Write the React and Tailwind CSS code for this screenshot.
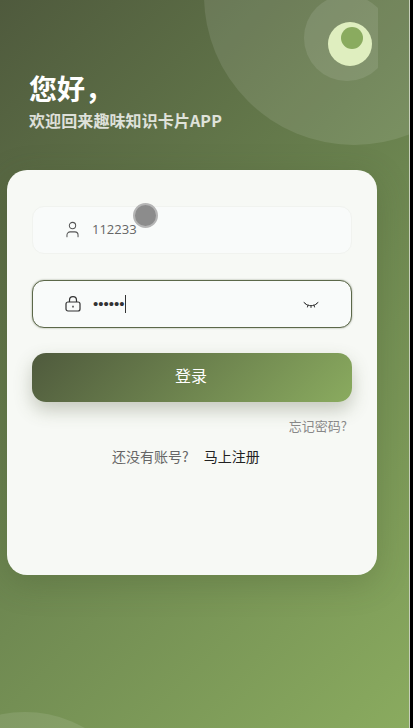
import React from 'react';
import { User } from 'lucide-react';

const font = { fontFamily: '"Noto Sans CJK SC", "Noto Sans", sans-serif' };

const App = () => {
    return (
        <div className="w-[413px] h-[728px] bg-black overflow-hidden" style={font}>
            <div className="relative w-[410px] h-full overflow-hidden border-r border-[#c9d0bd] bg-[linear-gradient(135deg,#4f5a3d_0%,#6c8550_50%,#8aab5f_100%)]">

                {/* Background circles */}
                <div className="absolute left-[204px] top-[-155px] w-[300px] h-[300px] rounded-full bg-white/10"></div>
                <div className="absolute left-0 top-0 w-[378px] h-[100px] overflow-hidden">
                    <div className="absolute left-[304px] top-[-5px] w-[86px] h-[86px] rounded-full bg-white/10"></div>
                    <div className="absolute left-[328px] top-[22px] w-[44px] h-[44px] rounded-full bg-[#dfeebf]">
                        <div className="absolute left-[13px] top-[5px] w-[22px] h-[22px] rounded-full bg-[#8aab5f]"></div>
                    </div>
                </div>
                <div className="absolute left-[-95px] top-[712px] w-[240px] h-[240px] rounded-full bg-white/10"></div>

                {/* Greeting */}
                <div className="relative flex flex-col gap-[1px] pt-[69px] pl-[29px] h-[170px]">
                    <h1 className="text-[28px] leading-[38px] font-bold text-white">您好，</h1>
                    <p className="text-[16px] leading-[24px] font-bold tracking-[0.1px] text-white/80">欢迎回来趣味知识卡片APP</p>
                </div>

                {/* Login card */}
                <div className="relative ml-[7px] w-[370px] h-[405px] rounded-[20px] bg-[#f7f9f5] pt-[36px] px-[25px] shadow-[0_8px_32px_rgba(60,75,40,0.25)]">
                    <div className="flex flex-col gap-[26px]">
                        <div className="flex items-center gap-[10px] h-[48px] rounded-[12px] border border-[#f1f3ef] bg-[#f9fbfa] pl-[30px]">
                            <User size={19} strokeWidth={1.3} className="text-[#555] -mt-[1px]" />
                            <span className="text-[13px] text-[#666] font-['Open_Sans',sans-serif]">112233</span>
                        </div>

                        <div className="flex items-center h-[48px] rounded-[12px] border border-[#5c6849] bg-[#f9fbfa] pl-[32px] pr-[32px] shadow-[0_0_2px_rgba(79,90,61,0.6)]">
                            <svg width="16" height="16" viewBox="0 0 16 16" fill="none" stroke="#333" strokeWidth="1.2">
                                <rect x="1" y="6" width="14" height="9" rx="2" />
                                <path d="M4.500 6V4.200a3.500 3.500 0 0 1 7 0V6" />
                                <path d="M8 9.800v1.600" strokeWidth="1.4" />
                            </svg>
                            <span className="ml-[12px] text-[15px] leading-[18px] text-[#333] font-['Liberation_Sans',sans-serif]">••••••</span>
                            <span className="w-px h-[18px] bg-[#333]"></span>
                            <svg className="ml-auto mt-[1px]" width="16" height="10" viewBox="0 0 16 10" fill="none" stroke="#333" strokeWidth="1" strokeLinecap="round">
                                <path d="M2 3.500c3 3 9 3 12 0" />
                                <path d="M1 2.500l1.500 1M15 2.500l-1.500 1M5 5l-.5 2M11 5l.5 2M8 5.500v2" />
                            </svg>
                        </div>
                    </div>

                    <button className="block mt-[25px] w-[320px] h-[49px] pb-[6px] pr-[2px] rounded-[14px] text-[16px] text-white bg-[linear-gradient(135deg,#4f5a3d_0%,#8aab5f_100%)] shadow-[0_8px_18px_rgba(79,90,61,0.3)]">登录</button>

                    <div className="mt-[14px] pr-[5px] text-right text-[13px] leading-[20px] text-[#888]">忘记密码?</div>

                    <div className="flex items-center gap-[15px] mt-[9px] pl-[80px] text-[14px] leading-[22px]">
                        <span className="text-[#666]">还没有账号?</span>
                        <span className="text-[#222]">马上注册</span>
                    </div>
                </div>

                {/* Touch indicator */}
                <div className="absolute left-[133px] top-[203px] w-[25px] h-[25px] rounded-full bg-[#8c8c8c] border-[2px] border-[#b5b5b5]"></div>
            </div>
        </div>
    );
};

export default App;
